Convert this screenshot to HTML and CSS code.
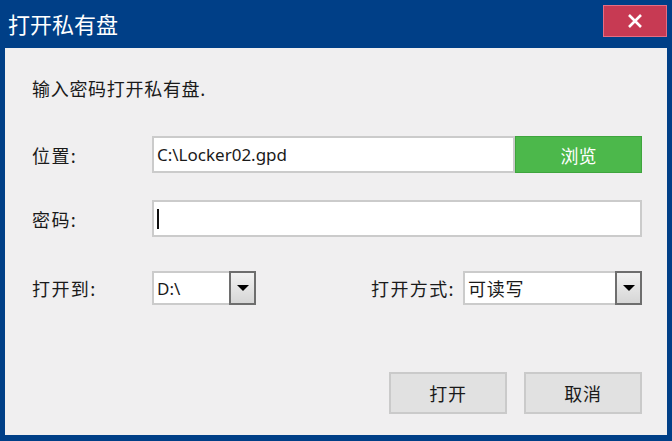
FILE: index.html
```html
<!DOCTYPE html>
<html lang="zh-CN">
<head>
<meta charset="utf-8">
<title>打开私有盘</title>
<link rel="stylesheet" href="styles.css">
</head>
<body>
<div class="window">
  <div class="titlebar">
    <span class="title">打开私有盘</span>
    <button class="close" aria-label="关闭">
      <svg width="16" height="16" viewBox="0 0 16 16"><path d="M2 2 L14 14 M14 2 L2 14" stroke="#fff" stroke-width="2.6" fill="none"/></svg>
    </button>
  </div>
  <div class="content">
    <p class="intro">输入密码打开私有盘.</p>
    <div class="row row-loc">
      <label class="label">位置:</label>
      <div class="field">
        <div class="input">C:\Locker02.gpd</div>
        <button class="browse">浏览</button>
      </div>
    </div>
    <div class="row row-pwd">
      <label class="label">密码:</label>
      <div class="field">
        <div class="input"><span class="caret"></span></div>
      </div>
    </div>
    <div class="row row-sel">
      <label class="label">打开到:</label>
      <div class="select sel-drive">
        <span class="sel-text">D:\</span>
        <span class="sel-btn"><span class="tri"></span></span>
      </div>
      <div class="mode">
        <label class="mode-label">打开方式:</label>
        <div class="select sel-mode">
          <span class="sel-text">可读写</span>
          <span class="sel-btn"><span class="tri"></span></span>
        </div>
      </div>
    </div>
    <div class="actions">
      <button class="btn">打开</button>
      <button class="btn">取消</button>
    </div>
  </div>
</div>
</body>
</html>
```
FILE: styles.css
```css
* { box-sizing: border-box; }
html, body { margin: 0; padding: 0; }
body {
  width: 672px;
  height: 441px;
  overflow: hidden;
  font-family: "Noto Sans", "Noto Sans CJK SC", sans-serif;
  color: #1a1a1a;
}
.window {
  width: 672px;
  height: 441px;
  background: #003f87;
  padding: 0 5px 6px 5px;
  display: flex;
  flex-direction: column;
}
.titlebar {
  height: 48px;
  display: flex;
  justify-content: space-between;
  align-items: flex-start;
  flex-shrink: 0;
}
.title {
  font-family: "Noto Sans CJK SC", sans-serif;
  color: #fff;
  font-size: 22px;
  line-height: 24px;
  margin-top: 11px;
  padding-left: 3px;
}
.close {
  margin-top: 5px;
  width: 64px;
  height: 32px;
  background: #c73a53;
  border: 1px solid #e66d82;
  padding: 0;
  display: flex;
  align-items: center;
  justify-content: center;
}
.content {
  flex: 1;
  background: #f0eff0;
  padding: 28px 25px 0 27px;
  display: flex;
  flex-direction: column;
}
.intro {
  margin: 0;
  font-family: "Noto Sans CJK SC", sans-serif;
  font-size: 18px;
  letter-spacing: 0.7px;
  line-height: 24px;
}
.row {
  display: flex;
  align-items: center;
}
.row-loc { margin-top: 36px; }
.row-pwd { margin-top: 27px; }
.row-sel { margin-top: 34px; }
.label, .mode-label {
  font-family: "Noto Sans CJK SC", sans-serif;
  font-size: 18px;
  letter-spacing: 1.4px;
  width: 120px;
  flex-shrink: 0;
}
.field {
  flex: 1;
  display: flex;
  height: 37px;
}
.input {
  flex: 1;
  background: #fff;
  border: 2px solid #cbcbcb;
  display: flex;
  align-items: center;
  padding-left: 3px;
  font-size: 17px;
}
.caret {
  display: block;
  width: 2px;
  height: 20px;
  background: #111;
}
.browse {
  width: 127px;
  background: #4cb84b;
  border: 1px solid #3fa53e;
  color: #fff;
  font-family: "Noto Sans CJK SC", sans-serif;
  font-size: 18px;
  padding: 0;
}
.select {
  height: 34px;
  background: #fff;
  border: 2px solid #cbcbcb;
  display: flex;
  align-items: stretch;
}
.sel-drive { width: 104px; }
.sel-mode { width: 179px; }
.sel-text {
  flex: 1;
  display: flex;
  align-items: center;
  padding-left: 3px;
  font-family: "Noto Sans", "Noto Sans CJK SC", sans-serif;
  font-size: 17px;
}
.sel-mode .sel-text { font-size: 18px; letter-spacing: 0.7px; }
.sel-btn {
  width: 27px;
  margin: -2px -2px -2px 0;
  border: 2px solid #6e6e6e;
  background: linear-gradient(#f2f2f2, #d6d6d6);
  display: flex;
  align-items: center;
  justify-content: center;
}
.tri {
  width: 0;
  height: 0;
  border-left: 6px solid transparent;
  border-right: 6px solid transparent;
  border-top: 6px solid #000;
}
.mode {
  margin-left: auto;
  display: flex;
  align-items: center;
}
.mode-label {
  width: auto;
  margin-right: 8px;
}
.actions {
  margin-top: 67px;
  display: flex;
  justify-content: flex-end;
  gap: 17px;
}
.btn {
  width: 118px;
  height: 42px;
  background: #e1e1e1;
  border: 2px solid #cacaca;
  font-family: "Noto Sans CJK SC", sans-serif;
  font-size: 18px;
  letter-spacing: 0.7px;
  color: #1a1a1a;
  padding: 0;
}
```
